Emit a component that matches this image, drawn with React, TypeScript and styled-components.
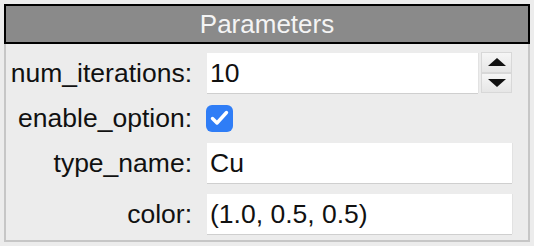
import React from "react";
import styled, { createGlobalStyle } from "styled-components";

const Global = createGlobalStyle`
  html, body { margin: 0; padding: 0; background: #ececec; }
  body { font-family: "Liberation Sans", Arial, sans-serif; }
  * { box-sizing: border-box; }
`;

const Page = styled.div`
  padding: 4px;
  width: 534px;
`;

const Panel = styled.div`
  width: 526px;
  display: flex;
  flex-direction: column;
`;

const Header = styled.div`
  height: 40px;
  background: #8a8a8a;
  border: 2px solid #000;
  color: #f4f4f4;
  font-size: 26px;
  display: flex;
  align-items: center;
  justify-content: center;
  padding-top: 1px;
`;

const Body = styled.div`
  border: 2px solid #c6c6c6;
  border-top: none;
  background: #ececec;
  height: 198px;
  padding: 9px 16px 0 0;
  display: grid;
  grid-template-columns: 186px 1fr;
  column-gap: 15px;
  row-gap: 11px;
  grid-template-rows: 40px 28px 40px 40px;
  align-items: center;
`;

const Label = styled.div`
  font-size: 26.5px;
  color: #111;
  text-align: right;
  white-space: nowrap;
`;

const Field = styled.div`
  height: 40px;
  background: #fff;
  box-shadow: 0 1px 0 #cfcfcf, 1px 0 0 #e2e2e2;
  font-size: 26.5px;
  color: #111;
  display: flex;
  align-items: center;
  padding-left: 3px;
  padding-top: 1px;
  flex: 1;
`;

const SpinRow = styled.div`
  display: flex;
  align-items: center;
  gap: 3px;
`;

const Spinner = styled.div`
  display: flex;
  flex-direction: column;
  width: 31px;
  height: 41px;
  margin-top: -1px;
`;

const SpinButton = styled.div`
  flex: 1;
  background: linear-gradient(#f6f6f6, #e6e6e6);
  border: 1px solid #d8d8d8;
  display: flex;
  align-items: center;
  justify-content: center;
`;

const CheckBox = styled.div`
  width: 27px;
  height: 27px;
  margin-left: -1px;
  border-radius: 6px;
  background: #2f7df6;
  display: flex;
  align-items: center;
  justify-content: center;
`;

const Tri = ({ up }: { up?: boolean }) => (
  <svg width="18" height="8" viewBox="0 0 18 8">
    {up ? <polygon points="9,0 18,8 0,8" fill="#111" /> : <polygon points="0,0 18,0 9,8" fill="#111" />}
  </svg>
);

export default function App() {
  return (
    <>
      <Global />
      <Page>
        <Panel>
          <Header>Parameters</Header>
          <Body>
            <Label>num_iterations:</Label>
            <SpinRow>
              <Field>10</Field>
              <Spinner>
                <SpinButton><Tri up /></SpinButton>
                <SpinButton><Tri /></SpinButton>
              </Spinner>
            </SpinRow>
            <Label>enable_option:</Label>
            <div>
              <CheckBox>
                <svg width="19" height="16" viewBox="0 0 19 16">
                  <path d="M2.5 8.5 L7 13 L16.5 2.5" stroke="#fff" strokeWidth="3.4" fill="none" strokeLinecap="round" strokeLinejoin="round" />
                </svg>
              </CheckBox>
            </div>
            <Label>type_name:</Label>
            <Field>Cu</Field>
            <Label>color:</Label>
            <Field>(1.0, 0.5, 0.5)</Field>
          </Body>
        </Panel>
      </Page>
    </>
  );
}
